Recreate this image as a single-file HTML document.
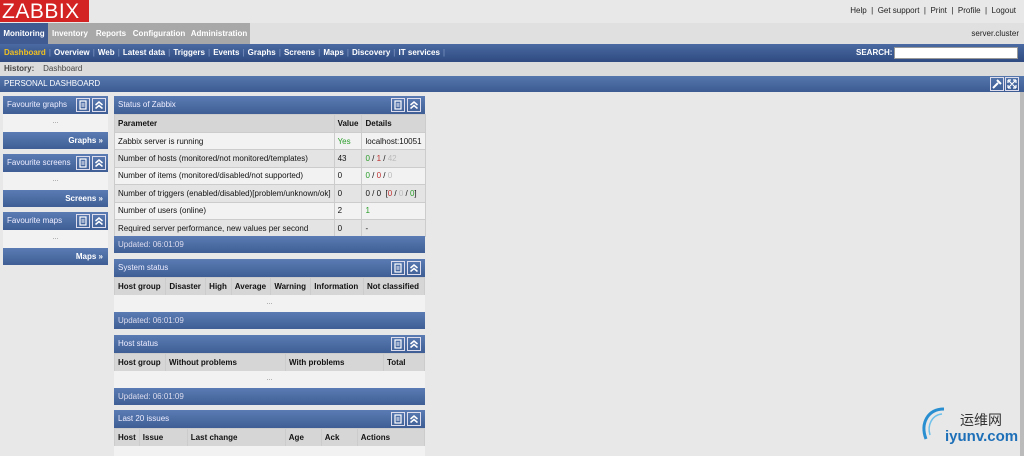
<!DOCTYPE html>
<html><head><meta charset="utf-8"><style>
*{margin:0;padding:0;box-sizing:border-box}
body{width:1024px;height:456px;overflow:hidden;background:#e8e8e8;font-family:"Liberation Sans",Arial,sans-serif;font-size:8px;color:#111;position:relative}
.a{position:absolute}
.logo{left:0;top:0;width:89px;height:22px;background:#d32323;color:#fff;font-size:21px;line-height:23px;padding-left:2px;letter-spacing:0.5px}
.toplinks{right:8px;top:6px;font-size:8px;color:#222}
.tabs{left:0;top:23px;width:1024px;height:21px;background:#e0e0e0}
.tab{position:absolute;top:0;height:21px;line-height:21px;color:#fff;font-weight:bold;font-size:8px;text-align:center;background:#a8a8a8}
.nav{left:0;top:44px;width:1024px;height:18px;background:linear-gradient(#4b6aa3,#2e4a80);color:#fff;font-weight:bold;font-size:8px;line-height:18px;padding-left:4px}
.nav span.s{color:#6b84b3;margin:0 3px}
.hist{left:0;top:62px;width:1024px;height:14px;background:#dcdcdc;font-size:8px;line-height:13px;padding-left:4px;color:#444}
.pd{left:0;top:76px;width:1024px;height:16px;background:linear-gradient(#5576ad,#3c5b93);color:#fff;font-size:8px;line-height:16px;padding-left:4px}
.hd{position:absolute;height:18px;background:linear-gradient(#5a7bb3,#3f5e96);color:#eef;font-size:8px;line-height:18px;padding-left:4px}
.ft{position:absolute;height:17px;background:linear-gradient(#5a7bb3,#3f5e96);color:#dde;font-size:8px;line-height:17px;padding-left:4px}
.ftr{text-align:right;padding-right:5px;font-weight:bold;color:#fff}
.dots{position:absolute;background:#f2f2f2;text-align:center;color:#777;font-size:7px;line-height:16px}
.ic{position:absolute;top:2px;width:14px;height:14px;border:1px solid #dde}
.ic svg{display:block}
table{position:absolute;border-collapse:collapse;font-size:8px}
td,th{border:1px solid #ccc;padding:0 3px;text-align:left;white-space:nowrap}
th{background:#d6d6d6;font-weight:bold}
.g{color:#2a9d2a}.r{color:#c03030}.l{color:#bbb}
</style></head><body>
<svg width="0" height="0" style="position:absolute"><defs>
<symbol id="m" viewBox="0 0 12 12"><rect x="3" y="2" width="6" height="8" fill="none" stroke="#fff" stroke-width="1.2"/><line x1="4.5" y1="5" x2="7.5" y2="5" stroke="#fff"/><line x1="4.5" y1="7" x2="7.5" y2="7" stroke="#fff"/></symbol>
<symbol id="c" viewBox="0 0 12 12"><path d="M2.5 6 L6 3 L9.5 6 M2.5 9.5 L6 6.5 L9.5 9.5" fill="none" stroke="#fff" stroke-width="1.5"/></symbol>
</defs></svg>
<div class="a logo">ZABBIX</div>
<div class="a toplinks">Help&nbsp; | &nbsp;Get support&nbsp; | &nbsp;Print&nbsp; | &nbsp;Profile&nbsp; | &nbsp;Logout</div>
<div class="a tabs">
<div class="tab" style="left:0;width:48px;background:#3f5b92">Monitoring</div>
<div class="tab" style="left:48px;width:44px">Inventory</div>
<div class="tab" style="left:92px;width:38px">Reports</div>
<div class="tab" style="left:130px;width:58px">Configuration</div>
<div class="tab" style="left:188px;width:62px">Administration</div>
<div class="a" style="right:5px;top:6px;font-size:8px;color:#222">server.cluster</div>
</div>
<div class="a nav"><span style="color:#f0c020">Dashboard</span><span class="s">|</span>Overview<span class="s">|</span>Web<span class="s">|</span>Latest data<span class="s">|</span>Triggers<span class="s">|</span>Events<span class="s">|</span>Graphs<span class="s">|</span>Screens<span class="s">|</span>Maps<span class="s">|</span>Discovery<span class="s">|</span>IT services<span class="s">|</span>
<span style="position:absolute;left:856px;top:0">SEARCH:</span>
<span style="position:absolute;left:894px;top:3px;width:124px;height:12px;background:#fff;border:1px solid #999"></span></div>
<div class="a hist"><b>History:</b>&nbsp;&nbsp;&nbsp;&nbsp;Dashboard</div>
<div class="a pd">PERSONAL DASHBOARD
<span class="ic" style="left:990px;top:1px"><svg width="12" height="12" viewBox="0 0 12 12"><path d="M2 10 L7 5 M6 2 L10 6" stroke="#fff" stroke-width="2"/></svg></span><span class="ic" style="left:1005px;top:1px"><svg width="12" height="12" viewBox="0 0 12 12"><path d="M2 2 L10 10 M10 2 L2 10 M2 2h3M2 2v3M10 2h-3M10 2v3M2 10h3M2 10v-3M10 10h-3M10 10v-3" stroke="#fff" stroke-width="1.2" fill="none"/></svg></span></div>
<div class="a" style="left:1020px;top:92px;width:4px;height:364px;background:#bbb"></div>

<div class="hd" style="left:3px;top:96px;width:105px">Favourite graphs<span class="ic" style="left:73px"><svg width="12" height="12"><use href="#m"/></svg></span><span class="ic" style="left:89px"><svg width="12" height="12"><use href="#c"/></svg></span></div>
<div class="dots" style="left:3px;top:114px;width:105px;height:18px">...</div>
<div class="ft ftr" style="left:3px;top:132px;width:105px">Graphs »</div>
<div class="hd" style="left:3px;top:154px;width:105px">Favourite screens<span class="ic" style="left:73px"><svg width="12" height="12"><use href="#m"/></svg></span><span class="ic" style="left:89px"><svg width="12" height="12"><use href="#c"/></svg></span></div>
<div class="dots" style="left:3px;top:172px;width:105px;height:18px">...</div>
<div class="ft ftr" style="left:3px;top:190px;width:105px">Screens »</div>
<div class="hd" style="left:3px;top:212px;width:105px">Favourite maps<span class="ic" style="left:73px"><svg width="12" height="12"><use href="#m"/></svg></span><span class="ic" style="left:89px"><svg width="12" height="12"><use href="#c"/></svg></span></div>
<div class="dots" style="left:3px;top:230px;width:105px;height:18px">...</div>
<div class="ft ftr" style="left:3px;top:248px;width:105px">Maps »</div>

<div class="hd" style="left:114px;top:96px;width:311px">Status of Zabbix<span class="ic" style="left:277px"><svg width="12" height="12"><use href="#m"/></svg></span><span class="ic" style="left:293px"><svg width="12" height="12"><use href="#c"/></svg></span></div>
<table style="left:114px;top:114px;width:311px">
<tr style="height:18px"><th>Parameter</th><th>Value</th><th>Details</th></tr>
<tr style="height:17.4px;background:#f2f2f2"><td>Zabbix server is running</td><td class="g">Yes</td><td>localhost:10051</td></tr>
<tr style="height:17.4px;background:#e4e4e4"><td>Number of hosts (monitored/not monitored/templates)</td><td>43</td><td><span class="g">0</span> / <span class="r">1</span> / <span class="l">42</span></td></tr>
<tr style="height:17.4px;background:#f2f2f2"><td>Number of items (monitored/disabled/not supported)</td><td>0</td><td><span class="g">0</span> / <span class="r">0</span> / <span class="l">0</span></td></tr>
<tr style="height:17.4px;background:#e4e4e4"><td>Number of triggers (enabled/disabled)[problem/unknown/ok]</td><td>0</td><td>0 / 0&nbsp; [<span class="r">0</span> / <span class="l">0</span> / <span class="g">0</span>]</td></tr>
<tr style="height:17.4px;background:#f2f2f2"><td>Number of users (online)</td><td>2</td><td class="g">1</td></tr>
<tr style="height:17.4px;background:#e4e4e4"><td>Required server performance, new values per second</td><td>0</td><td>-</td></tr>
</table>
<div class="ft" style="left:114px;top:236px;width:311px">Updated: 06:01:09</div>

<div class="hd" style="left:114px;top:259px;width:311px">System status<span class="ic" style="left:277px"><svg width="12" height="12"><use href="#m"/></svg></span><span class="ic" style="left:293px"><svg width="12" height="12"><use href="#c"/></svg></span></div>
<table style="left:114px;top:277px;width:311px"><tr style="height:18px"><th>Host group</th><th>Disaster</th><th>High</th><th>Average</th><th>Warning</th><th>Information</th><th>Not classified</th></tr></table>
<div class="dots" style="left:114px;top:295px;width:311px;height:17px">...</div>
<div class="ft" style="left:114px;top:312px;width:311px">Updated: 06:01:09</div>

<div class="hd" style="left:114px;top:335px;width:311px">Host status<span class="ic" style="left:277px"><svg width="12" height="12"><use href="#m"/></svg></span><span class="ic" style="left:293px"><svg width="12" height="12"><use href="#c"/></svg></span></div>
<table style="left:114px;top:353px;width:311px"><tr style="height:18px"><th style="width:51px">Host group</th><th style="width:120px">Without problems</th><th style="width:98px">With problems</th><th>Total</th></tr></table>
<div class="dots" style="left:114px;top:371px;width:311px;height:17px">...</div>
<div class="ft" style="left:114px;top:388px;width:311px">Updated: 06:01:09</div>

<div class="hd" style="left:114px;top:410px;width:311px">Last 20 issues<span class="ic" style="left:277px"><svg width="12" height="12"><use href="#m"/></svg></span><span class="ic" style="left:293px"><svg width="12" height="12"><use href="#c"/></svg></span></div>
<table style="left:114px;top:428px;width:311px"><tr style="height:18px"><th style="width:24px">Host</th><th style="width:48px">Issue</th><th style="width:98px">Last change</th><th style="width:36px">Age</th><th style="width:36px">Ack</th><th>Actions</th></tr></table>
<div class="dots" style="left:114px;top:446px;width:311px;height:10px"></div>

<svg class="a" style="left:918px;top:405px" width="30" height="40" viewBox="0 0 30 40"><path d="M26 4 C10 4 2 18 8 34" stroke="#2a8fd0" stroke-width="3" fill="none"/><path d="M24 9 C14 10 9 20 12 30" stroke="#6cc0ea" stroke-width="1.5" fill="none"/></svg>
<div class="a" style="left:960px;top:410px;font-size:14px;color:#333;font-family:'Liberation Sans','Noto Sans CJK SC',sans-serif">运维网</div>
<div class="a" style="left:945px;top:428px;font-size:15px;font-weight:bold;color:#1d6fb8">iyunv.com</div>
</body></html>
